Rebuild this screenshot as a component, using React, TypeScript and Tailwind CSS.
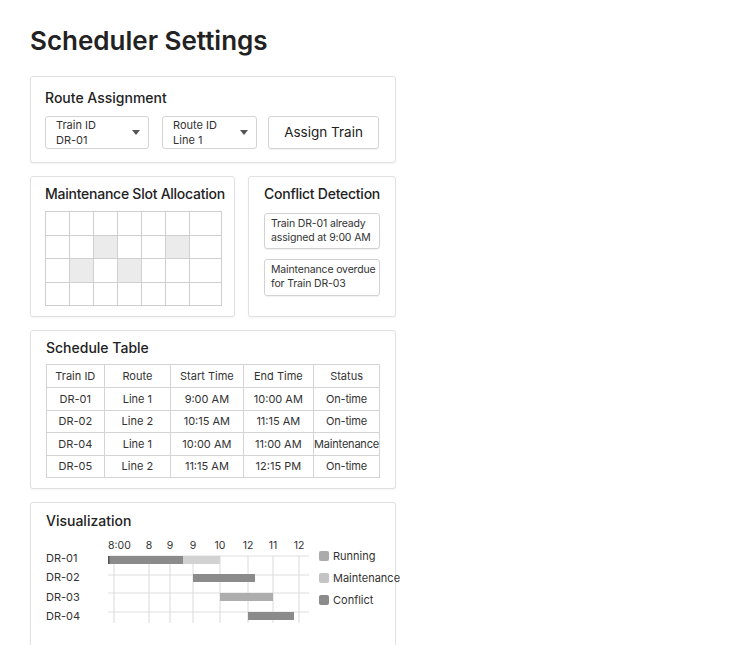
import React from 'react';

const SLOTS = [
  [0, 0, 0, 0, 0, 0, 0],
  [0, 0, 1, 0, 0, 1, 0],
  [0, 1, 0, 1, 0, 0, 0],
  [0, 0, 0, 0, 0, 0, 0],
];

const ROWS = [
  { id: 'DR-01', route: 'Line 1', start: '9:00 AM', end: '10:00 AM', status: 'On-time' },
  { id: 'DR-02', route: 'Line 2', start: '10:15 AM', end: '11:15 AM', status: 'On-time' },
  { id: 'DR-04', route: 'Line 1', start: '10:00 AM', end: '11:00 AM', status: 'Maintenance' },
  { id: 'DR-05', route: 'Line 2', start: '11:15 AM', end: '12:15 PM', status: 'On-time' },
];

// tick positions inside the chart svg
const TICKS = [
  { x: 68, label: '8:00' },
  { x: 103, label: '8' },
  { x: 124, label: '9' },
  { x: 147, label: '9' },
  { x: 174, label: '10' },
  { x: 202, label: '12' },
  { x: 227, label: '11' },
  { x: 253, label: '12' },
];

const Card = ({ className = '', children }: { className?: string; children: React.ReactNode }) => (
  <div className={'border border-[#e1e1e1] rounded-[3px] bg-white shadow-[0_1px_2px_rgba(0,0,0,0.05)] ' + className}>
    {children}
  </div>
);

const CardTitle = ({ tight = false, children }: { tight?: boolean; children: React.ReactNode }) => (
  <h2 className={'text-[14px] leading-[18px] font-medium text-[#222] whitespace-nowrap ' + (tight ? 'tracking-[-0.25px]' : '')}>
    {children}
  </h2>
);

const Select = ({ label, value, width }: { label: string; value: string; width: string }) => (
  <div className={'h-[33px] border border-[#d4d4d4] rounded-[3px] pl-[10px] pr-[8px] flex items-center justify-between ' + width}>
    <div className="text-[11px] leading-[15px] text-[#333]">
      <div>{label}</div>
      <div>{value}</div>
    </div>
    <svg width="8" height="5" viewBox="0 0 8 5">
      <path d="M0 0 L8 0 L4 5 Z" fill="#555" />
    </svg>
  </div>
);

const Chart = () => (
  <div className="flex items-start">
    <svg width="265" height="100" viewBox="0 0 265 100" className="shrink-0">
      {[20, 39, 57, 76].map(y => (
        <line key={y} x1="62" x2="263" y1={y} y2={y} stroke="#dedede" strokeWidth="1" />
      ))}
      {TICKS.map((t, i) => (
        <line key={i} x1={t.x} x2={t.x} y1="20" y2="87" stroke="#dadada" strokeWidth="1" />
      ))}
      {TICKS.map((t, i) => (
        <text
          key={'t' + i}
          x={i === 0 ? 62 : t.x}
          y="13"
          textAnchor={i === 0 ? 'start' : 'middle'}
          fontSize="10.5"
          fill="#333"
          fontFamily="Inter, sans-serif"
        >
          {t.label}
        </text>
      ))}
      {['DR-01', 'DR-02', 'DR-03', 'DR-04'].map((l, i) => (
        <text key={l} x="0" y={[26, 45, 65, 84][i]} fontSize="11" fill="#333" fontFamily="Inter, sans-serif">
          {l}
        </text>
      ))}
      <rect x="62" y="20" width="75" height="8" fill="#8b8b8b" />
      <rect x="62" y="20" width="1.5" height="8" fill="#555" />
      <rect x="137" y="20" width="37" height="8" fill="#d2d2d2" />
      <rect x="147" y="38" width="62" height="8" fill="#8b8b8b" />
      <rect x="174" y="57" width="53" height="8" fill="#adadad" />
      <rect x="202" y="76" width="46" height="8" fill="#8b8b8b" />
    </svg>
    <div className="ml-[8px] mt-[14px] flex flex-col gap-[10px] text-[11px] leading-[12px] text-[#333] whitespace-nowrap">
      {[
        { label: 'Running', color: 'bg-[#ababab]' },
        { label: 'Maintenance', color: 'bg-[#c4c4c4]' },
        { label: 'Conflict', color: 'bg-[#8b8b8b]' },
      ].map(l => (
        <div key={l.label} className="flex items-center gap-[4px]">
          <span className={'w-[10px] h-[10px] rounded-[2px] ' + l.color} />
          {l.label}
        </div>
      ))}
    </div>
  </div>
);

export default function App() {
  return (
    <div className="w-[742px] min-h-[645px] bg-white px-[30px] pt-[25px] text-[#222]" style={{ fontFamily: 'Inter, "Liberation Sans", sans-serif' }}>
      <h1 className="text-[26px] leading-[32px] font-semibold mb-[19px]">Scheduler Settings</h1>

      <div className="w-[366px] flex flex-col gap-[13px]">
        {/* Route Assignment */}
        <Card className="px-[14px] pt-[12px] pb-[13px]">
          <CardTitle>Route Assignment</CardTitle>
          <div className="mt-[9px] flex items-center">
            <Select label="Train ID" value="DR-01" width="w-[104px]" />
            <div className="ml-[13px]">
              <Select label="Route ID" value="Line 1" width="w-[95px]" />
            </div>
            <button className="ml-[11px] w-[111px] h-[33px] border border-[#d4d4d4] rounded-[3px] text-[13.5px] text-[#222] shadow-[0_1px_1px_rgba(0,0,0,0.06)]">
              Assign Train
            </button>
          </div>
        </Card>

        <div className="flex gap-[13px]">
          {/* Maintenance slots */}
          <Card className="w-[205px] shrink-0 px-[14px] pt-[8px] pb-[10px]">
            <CardTitle tight>Maintenance Slot Allocation</CardTitle>
            <div className="mt-[8px] w-[177px] grid grid-cols-[24px_24px_24px_24px_24px_24px_1fr] border-t border-l border-[#cfcfcf]">
              {SLOTS.flat().map((s, i) => (
                <div
                  key={i}
                  className={'h-[23.5px] border-r border-b border-[#cfcfcf] ' + (s ? 'bg-[#ebebeb]' : 'bg-white')}
                />
              ))}
            </div>
          </Card>

          {/* Conflict detection */}
          <Card className="w-[148px] shrink-0 pl-[15px] pr-[15px] pt-[8px] pb-[10px]">
            <CardTitle tight>Conflict Detection</CardTitle>
            <div className="mt-[10px] flex flex-col gap-[10px]">
              <div className="h-[36px] border border-[#d2d2d2] rounded-[3px] px-[6px] py-[3px] text-[10.5px] leading-[14px] tracking-[-0.15px] text-[#333] whitespace-nowrap shadow-[0_1px_1px_rgba(0,0,0,0.06)]">
                Train DR-01 already
                <br />
                assigned at 9:00 AM
              </div>
              <div className="h-[37px] border border-[#d2d2d2] rounded-[3px] px-[6px] py-[3px] text-[10.5px] leading-[14px] tracking-[-0.15px] text-[#333] whitespace-nowrap shadow-[0_1px_1px_rgba(0,0,0,0.06)]">
                Maintenance overdue
                <br />
                for Train DR-03
              </div>
            </div>
          </Card>
        </div>

        {/* Schedule table */}
        <Card className="px-[15px] pt-[8px] pb-[10px]">
          <CardTitle>Schedule Table</CardTitle>
          <table className="mt-[7px] border-collapse text-[11px] text-[#333] table-fixed">
            <colgroup>
              <col className="w-[58px]" />
              <col className="w-[67px]" />
              <col className="w-[73px]" />
              <col className="w-[71px]" />
              <col className="w-[64px]" />
            </colgroup>
            <thead>
              <tr className="h-[23px]">
                {['Train ID', 'Route', 'Start Time', 'End Time', 'Status'].map(h => (
                  <th key={h} className="border border-[#d4d4d4] font-normal text-center p-0">{h}</th>
                ))}
              </tr>
            </thead>
            <tbody>
              {ROWS.map(r => (
                <tr key={r.id} className="h-[22.5px]">
                  <td className="border border-[#d4d4d4] text-center p-0">{r.id}</td>
                  <td className="border border-[#d4d4d4] text-center p-0">{r.route}</td>
                  <td className="border border-[#d4d4d4] text-center p-0">{r.start}</td>
                  <td className="border border-[#d4d4d4] text-center p-0">{r.end}</td>
                  <td className="border border-[#d4d4d4] text-center p-0 whitespace-nowrap tracking-[-0.2px]">{r.status}</td>
                </tr>
              ))}
            </tbody>
          </table>
        </Card>

        {/* Visualization */}
        <Card className="px-[15px] pt-[9px] pb-[20px] mb-[20px]">
          <CardTitle>Visualization</CardTitle>
          <div className="mt-[6px]">
            <Chart />
          </div>
        </Card>
      </div>
    </div>
  );
}
